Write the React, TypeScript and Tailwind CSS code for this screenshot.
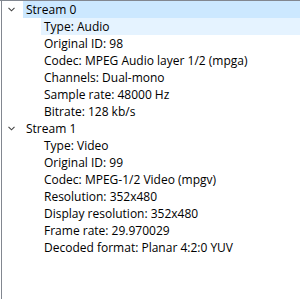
type Node = { label: string; props: string[] };

const STREAMS: Node[] = [
  {
    label: "Stream 0",
    props: [
      "Type: Audio",
      "Original ID: 98",
      "Codec: MPEG Audio layer 1/2 (mpga)",
      "Channels: Dual-mono",
      "Sample rate: 48000 Hz",
      "Bitrate: 128 kb/s",
    ],
  },
  {
    label: "Stream 1",
    props: [
      "Type: Video",
      "Original ID: 99",
      "Codec: MPEG-1/2 Video (mpgv)",
      "Resolution: 352x480",
      "Display resolution: 352x480",
      "Frame rate: 29.970029",
      "Decoded format: Planar 4:2:0 YUV",
    ],
  },
];

function Chevron() {
  return (
    <svg width="7" height="5" viewBox="0 0 7 5" className="shrink-0">
      <path d="M0.5 0.8 L3.5 3.8 L6.5 0.8" fill="none" stroke="#444" strokeWidth="1.1" />
    </svg>
  );
}

export default function App() {
  return (
    <div
      className="h-[299px] w-[300px] overflow-hidden border-t border-[#828790] bg-white pl-px text-[12px] text-black"
      style={{ fontFamily: '"Open Sans", "Noto Sans", sans-serif' }}
    >
      <div className="h-full border-l border-[#828790]">
        {STREAMS.map((s, i) => (
          <div key={s.label}>
            <div className="flex h-[17px] items-center">
              <div className="flex w-[21px] justify-end pr-[8px]">
                <Chevron />
              </div>
              <div className={`flex h-full flex-1 items-center pl-[3px] ${i === 0 ? "bg-[#cce8ff]" : ""}`}>
                {s.label}
              </div>
            </div>
            {s.props.map((p, j) => (
              <div key={p} className="flex h-[17px] items-center pl-[39px]">
                <div
                  className={`flex h-full flex-1 items-center pl-[3px] ${i === 0 && j === 0 ? "bg-[#e5f3ff]" : ""}`}
                >
                  {p}
                </div>
              </div>
            ))}
          </div>
        ))}
      </div>
    </div>
  );
}
